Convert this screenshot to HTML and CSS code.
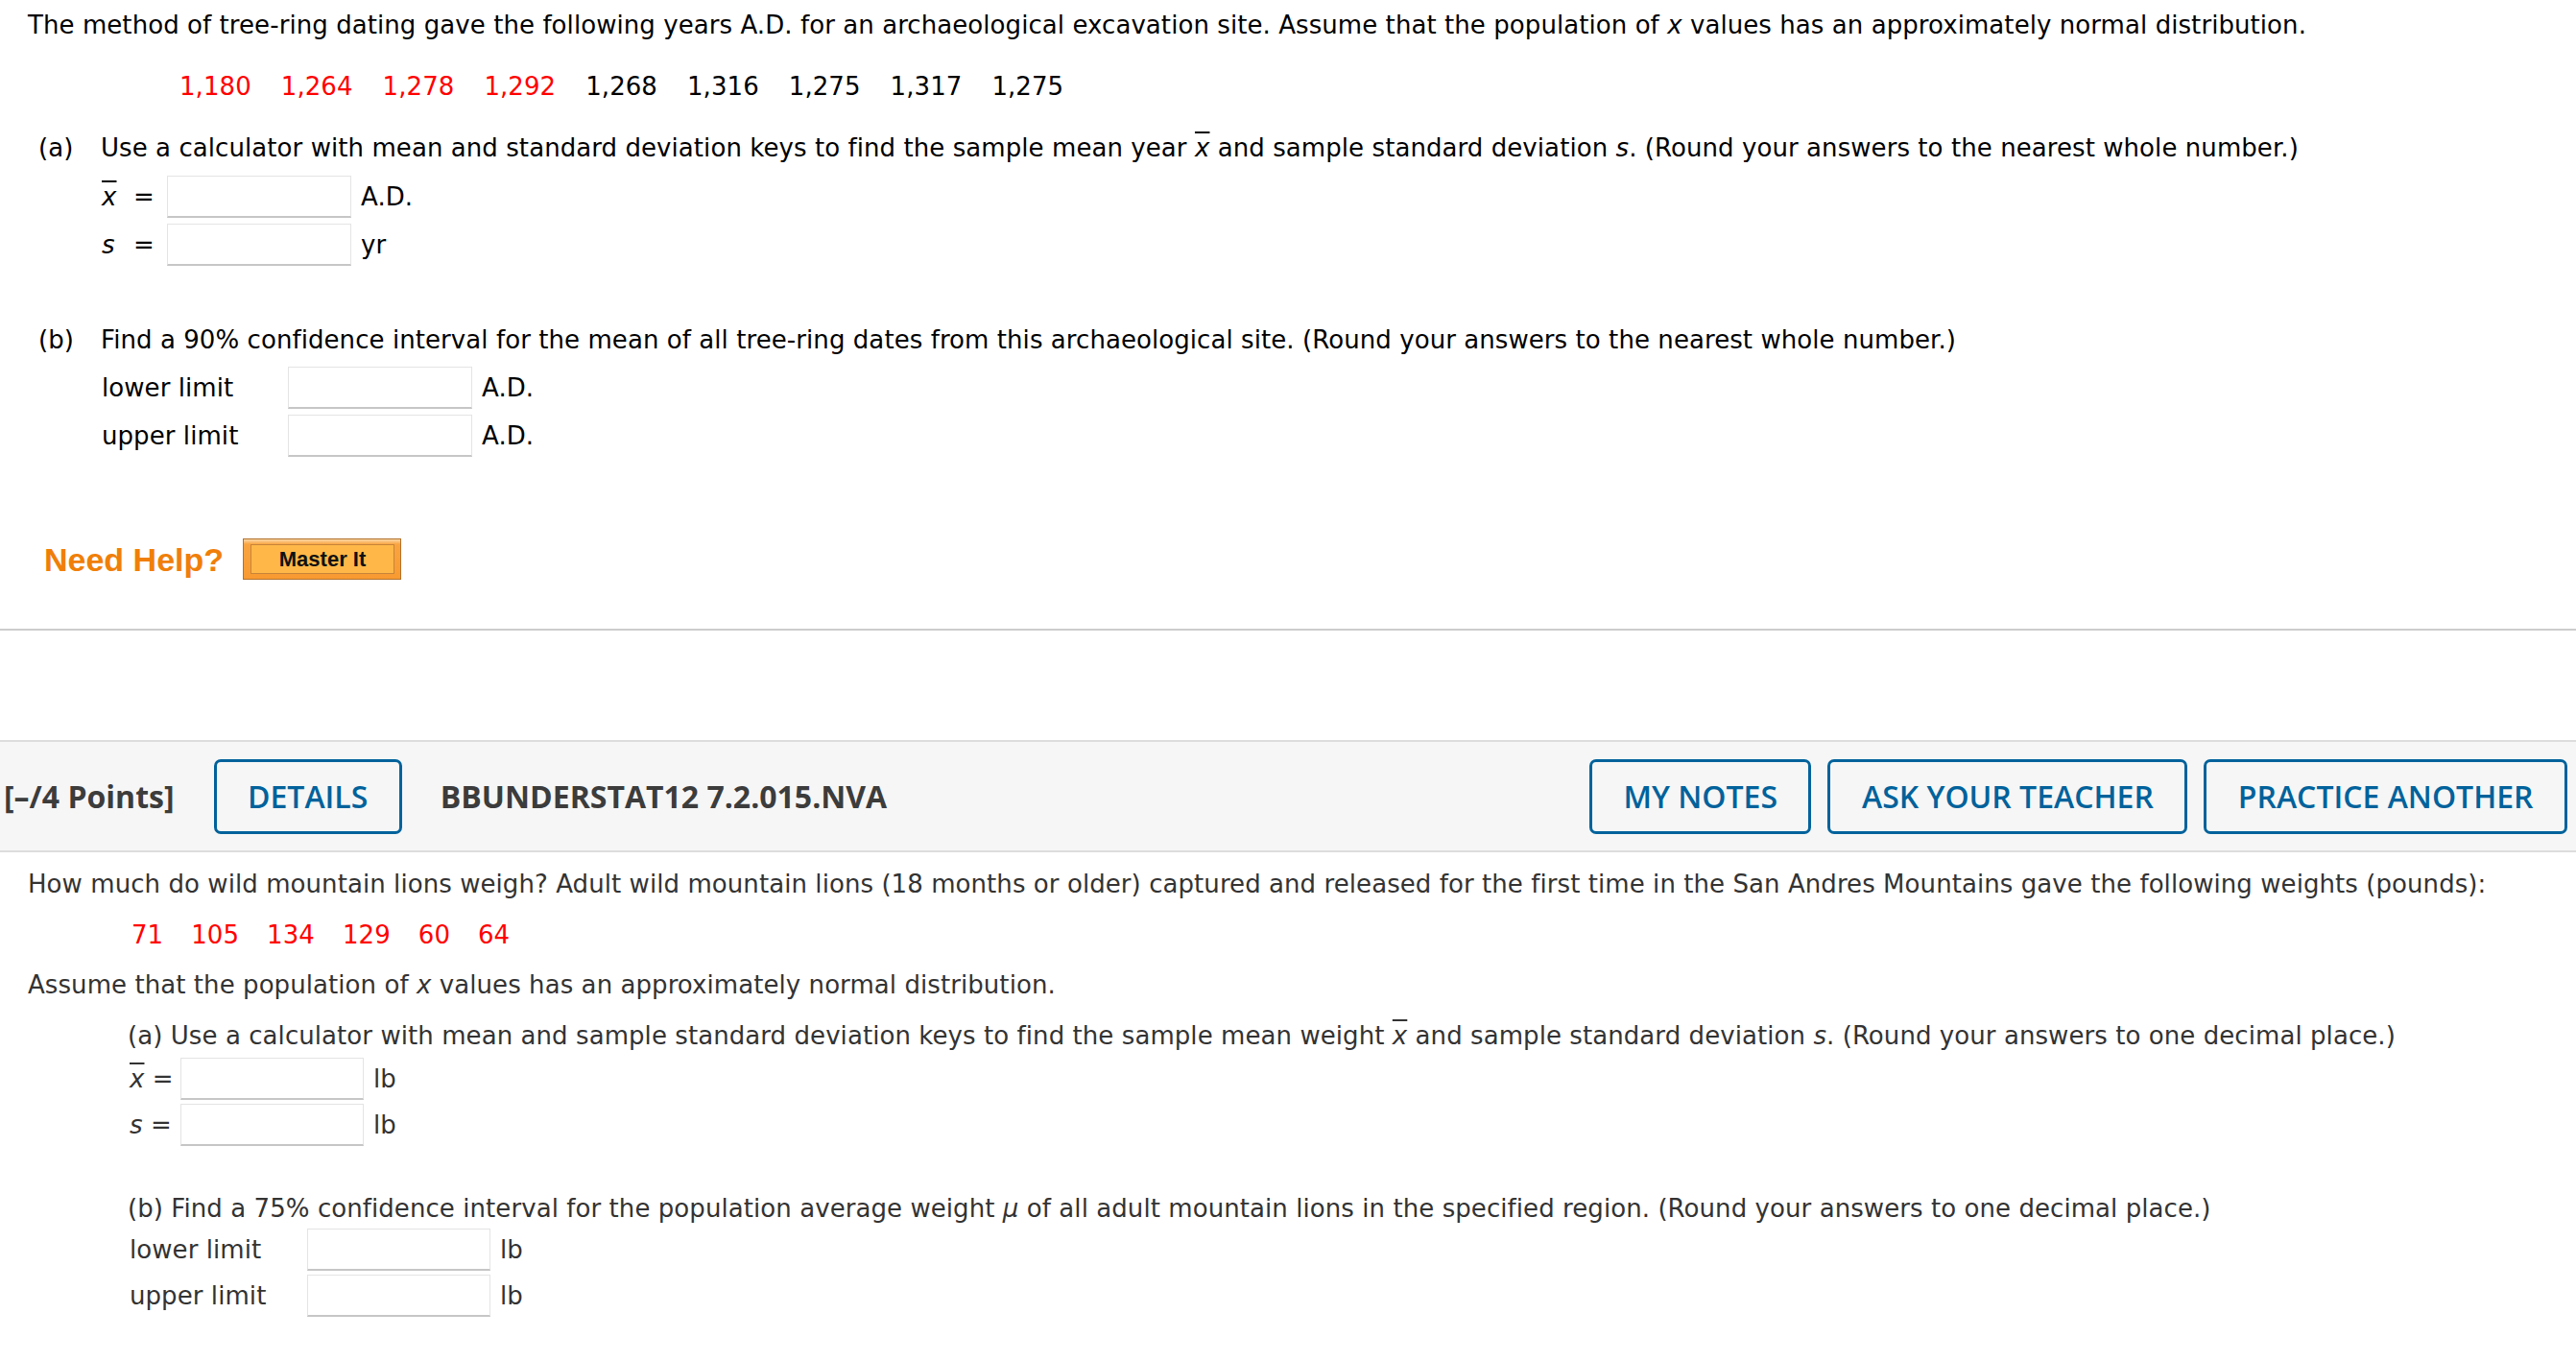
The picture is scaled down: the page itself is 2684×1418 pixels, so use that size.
FILE: index.html
```html
<!DOCTYPE html>
<html lang="en">
<head>
<meta charset="utf-8">
<title>Tree-ring dating</title>
<link rel="stylesheet" href="styles.css">
</head>
<body>
<div class="q1">
  <p class="intro">The method of tree-ring dating gave the following years A.D. for an archaeological excavation site. Assume that the population of <i>x</i> values has an approximately normal distribution.</p>
  <div class="data data1">
    <span class="red">1,180</span><span class="red">1,264</span><span class="red">1,278</span><span class="red">1,292</span><span>1,268</span><span>1,316</span><span>1,275</span><span>1,317</span><span>1,275</span>
  </div>
  <div class="part-head">
    <span class="plabel">(a)</span>
    <span>Use a calculator with mean and standard deviation keys to find the sample mean year <i class="bar">x</i> and sample standard deviation <i>s</i>. (Round your answers to the nearest whole number.)</span>
  </div>
  <div class="rows rows-a">
    <div class="row"><span class="var"><i class="bar">x</i></span><span class="eq">=</span><span class="inp"></span><span class="unit">A.D.</span></div>
    <div class="row"><span class="var"><i>s</i></span><span class="eq">=</span><span class="inp"></span><span class="unit">yr</span></div>
  </div>
  <div class="part-head part-b">
    <span class="plabel">(b)</span>
    <span>Find a 90% confidence interval for the mean of all tree-ring dates from this archaeological site. (Round your answers to the nearest whole number.)</span>
  </div>
  <div class="rows rows-b">
    <div class="row"><span class="lim">lower limit</span><span class="inp"></span><span class="unit">A.D.</span></div>
    <div class="row"><span class="lim">upper limit</span><span class="inp"></span><span class="unit">A.D.</span></div>
  </div>
  <div class="help">
    <span class="need">Need Help?</span>
    <span class="master"><span class="master-in">Master It</span></span>
  </div>
</div>

<div class="gap"></div>

<div class="bar-head">
  <span class="points">[–/4 Points]</span>
  <span class="btn">DETAILS</span>
  <span class="code">BBUNDERSTAT12 7.2.015.NVA</span>
  <span class="spacer"></span>
  <span class="btn">MY NOTES</span>
  <span class="btn">ASK YOUR TEACHER</span>
  <span class="btn">PRACTICE ANOTHER</span>
</div>

<div class="q2">
  <p class="intro2">How much do wild mountain lions weigh? Adult wild mountain lions (18 months or older) captured and released for the first time in the San Andres Mountains gave the following weights (pounds):</p>
  <div class="data data2">
    <span class="red">71</span><span class="red">105</span><span class="red">134</span><span class="red">129</span><span class="red">60</span><span class="red">64</span>
  </div>
  <p class="assume">Assume that the population of <i>x</i> values has an approximately normal distribution.</p>
  <div class="part2">
    <p class="p2head">(a) Use a calculator with mean and sample standard deviation keys to find the sample mean weight <i class="bar">x</i> and sample standard deviation <i>s</i>. (Round your answers to one decimal place.)</p>
    <div class="rows2">
      <div class="row2"><span class="var2"><i class="bar">x</i> =</span><span class="inp inp2"></span><span class="unit">lb</span></div>
      <div class="row2"><span class="var2"><i>s</i> =</span><span class="inp inp2"></span><span class="unit">lb</span></div>
    </div>
    <p class="p2head p2b">(b) Find a 75% confidence interval for the population average weight <i>μ</i> of all adult mountain lions in the specified region. (Round your answers to one decimal place.)</p>
    <div class="rows2">
      <div class="row2"><span class="lim2">lower limit</span><span class="inp inp2"></span><span class="unit">lb</span></div>
      <div class="row2"><span class="lim2">upper limit</span><span class="inp inp2"></span><span class="unit">lb</span></div>
    </div>
  </div>
</div>
</body>
</html>
```
FILE: styles.css
```css
* { box-sizing: border-box; }
html, body { margin: 0; padding: 0; background: #fff; }
body {
  font-family: "DejaVu Sans", Verdana, sans-serif;
  font-size: 26px;
  line-height: 32px;
  letter-spacing: 0.07px;
  color: #000;
}
p { margin: 0; }
i { font-style: italic; }
.bar { text-decoration: overline; text-decoration-thickness: 2px; }
.red { color: #ff0000; }

.q1 {
  padding: 10px 0 51px 29px;
  border-bottom: 2px solid #cccccc;
}
.intro { height: 32px; white-space: nowrap; }
.data { display: flex; white-space: nowrap; }
.data1 { margin: 32px 0 0 158px; gap: 31px; }
.part-head { display: flex; margin: 32px 0 0 11px; white-space: nowrap; }
.plabel { width: 65px; flex: none; }
.part-b { margin-top: 61px; }
.rows { margin-left: 77px; display: flex; flex-direction: column; gap: 6px; }
.rows-a { margin-top: 13px; }
.rows-b { margin-top: 12px; }
.row { display: flex; align-items: center; height: 44px; }
.var { width: 33px; flex: none; }
.eq { width: 35px; flex: none; }
.lim { width: 194px; flex: none; }
.inp {
  display: block;
  width: 192px;
  height: 44px;
  flex: none;
  background: #fff;
  border: 1px solid #e4e4e4;
  border-bottom: 2px solid #c6c6c6;
}
.unit { margin-left: 10px; }

.help { display: flex; align-items: center; margin: 85px 0 0 17px; height: 43px; }
.need {
  font-family: "Liberation Sans", Arial, sans-serif;
  font-weight: bold;
  font-size: 34px;
  letter-spacing: 0;
  color: #f07f0a;
  line-height: 40px;
}
.master {
  margin-left: 20px;
  width: 165px;
  height: 43px;
  padding: 5px 6px 5px 7px;
  border: 1px solid #b2712c;
  background: linear-gradient(#fbd9a8 0, #f9a440 5px, #f89a30 100%);
  display: flex;
}
.master-in {
  flex: 1;
  display: flex;
  align-items: center;
  justify-content: center;
  border: 1px solid #c7843a;
  background: #ffb848;
  font-family: "Liberation Sans", Arial, sans-serif;
  font-weight: bold;
  font-size: 22px;
  line-height: 22px;
  letter-spacing: 0;
  color: #111;
}

.gap { height: 114px; }

.bar-head {
  display: flex;
  align-items: center;
  height: 117px;
  background: #f6f6f6;
  border-top: 2px solid #dddddd;
  border-bottom: 2px solid #dddddd;
  padding: 0 9px 0 4px;
  font-family: "Open Sans", sans-serif;
  font-size: 32px;
  line-height: 40px;
  letter-spacing: 0;
  color: #3c3c3c;
  white-space: nowrap;
}
.points { font-weight: 700; margin-right: 41px; }
.code { font-weight: 700; margin-left: 40px; }
.spacer { flex: 1; }
.btn {
  display: flex;
  align-items: center;
  height: 78px;
  padding: 0 32.5px;
  border: 3px solid #00629b;
  border-radius: 7px;
  color: #00629b;
  font-weight: 600;
}
.btn + .btn { margin-left: 17px; }

.q2 { padding: 17px 0 40px 29px; color: #333; }
.intro2 { white-space: nowrap; }
.data2 { margin: 21px 0 0 108px; gap: 29px; }
.assume { margin-top: 20px; }
.part2 { margin: 21px 0 0 104px; }
.p2head { white-space: nowrap; }
.p2b { margin-top: 49px; }
.rows2 { margin-left: 2px; display: flex; flex-direction: column; gap: 4px; margin-top: 7px; }
.p2b + .rows2 { margin-top: 5px; }
.row2 { display: flex; align-items: center; height: 44px; }
.var2 { width: 53px; flex: none; white-space: nowrap; }
.lim2 { width: 185px; flex: none; }
.inp2 { width: 191px; }
```
